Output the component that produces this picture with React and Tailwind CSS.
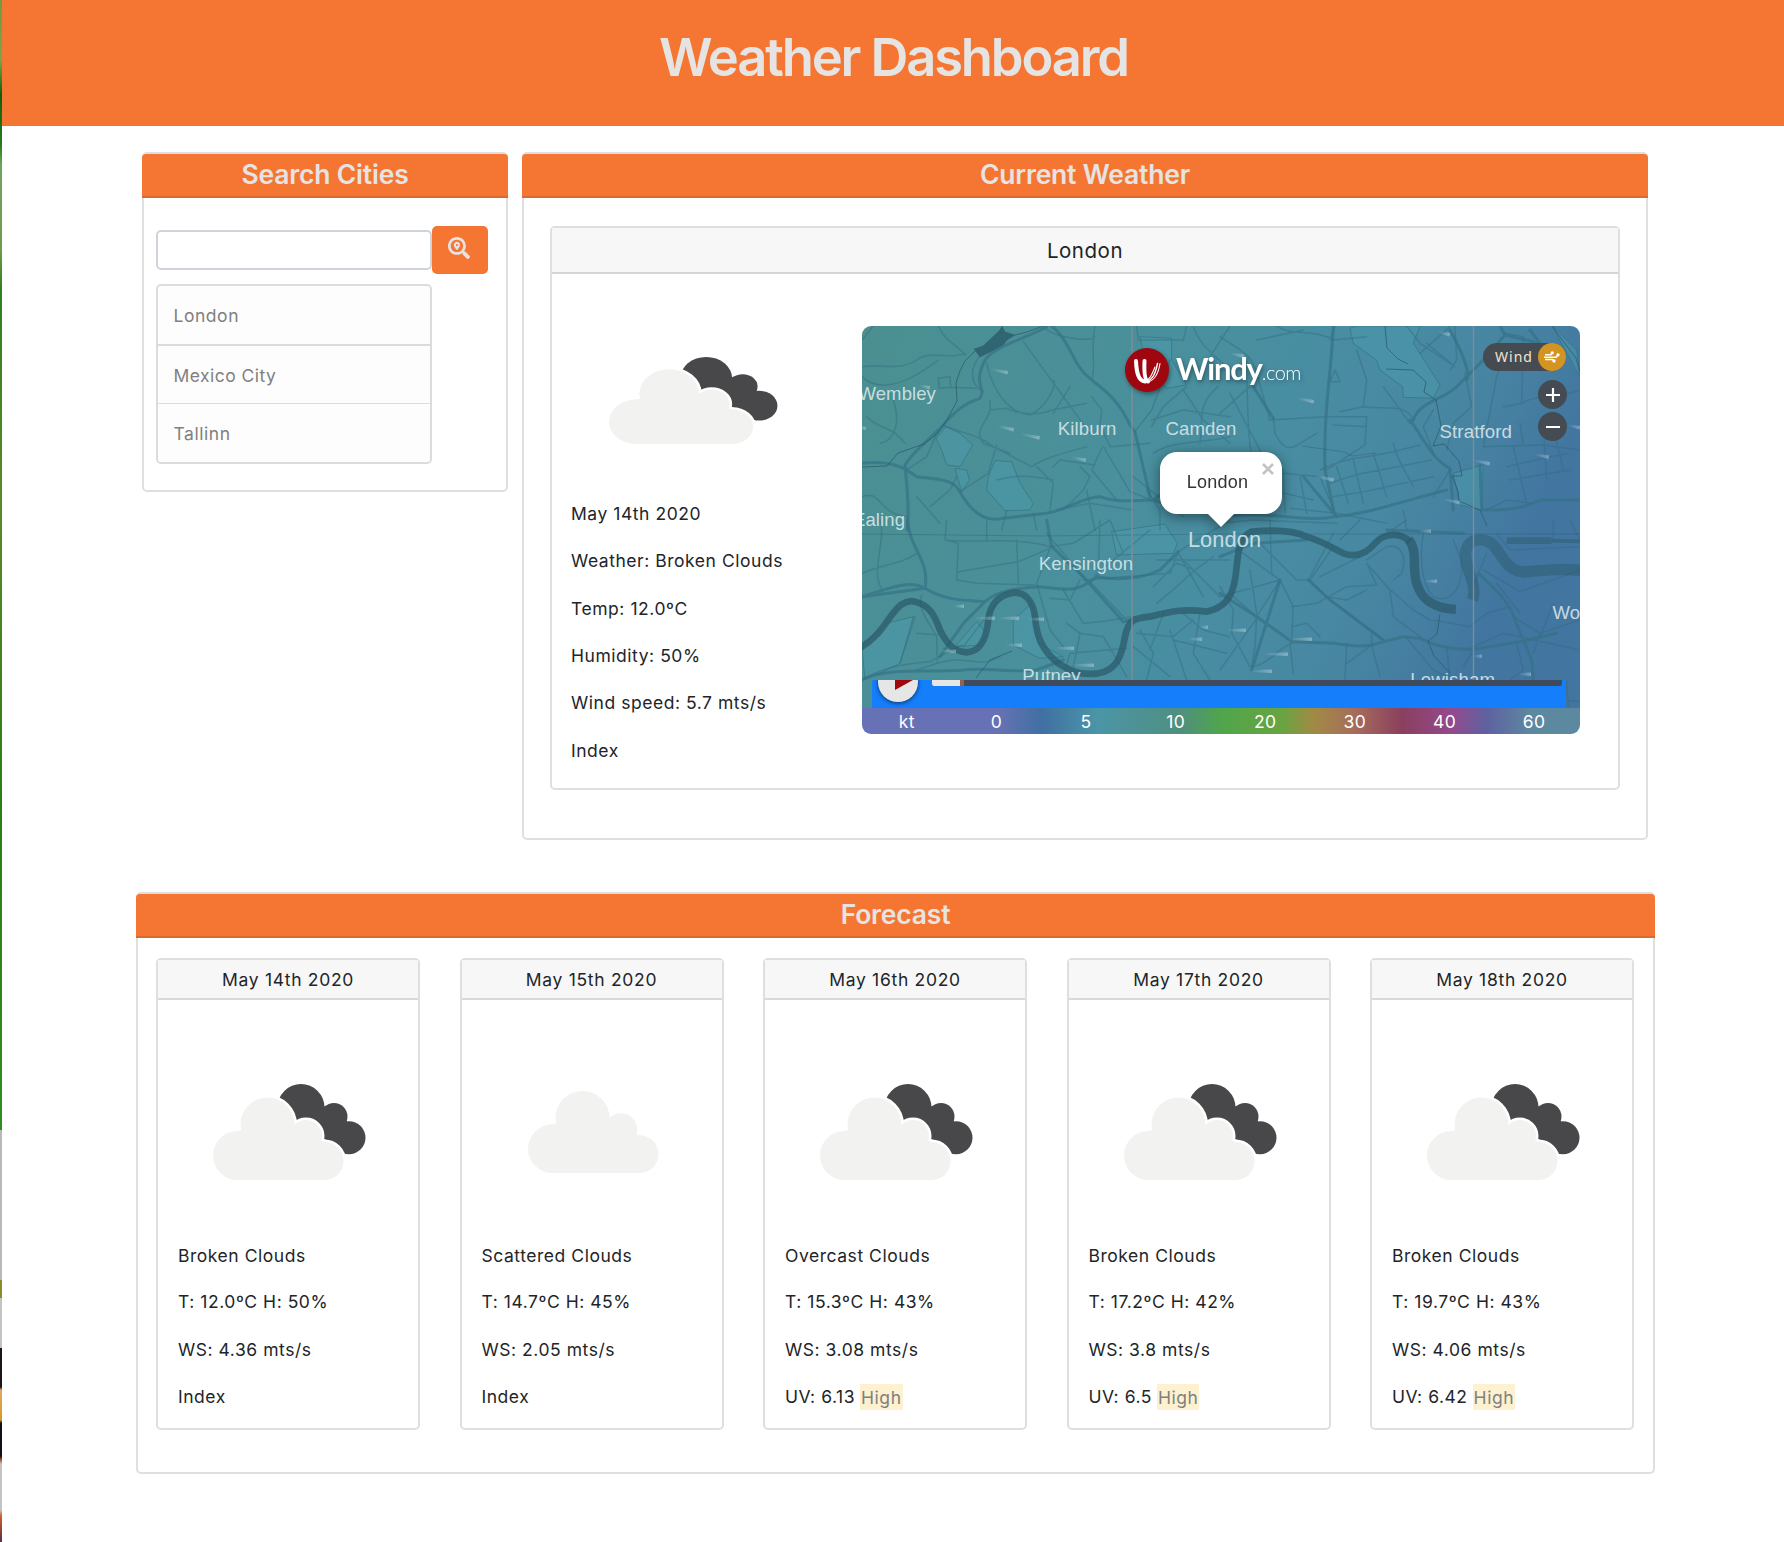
import React from "react";
import { FaSearchLocation } from "react-icons/fa";

function CloudShape() {
  return (
    <>
      <circle cx="24.500" cy="71.500" r="24.500" />
      <circle cx="54.500" cy="40.500" r="27" />
      <circle cx="93" cy="52" r="16" />
      <circle cx="111.500" cy="77" r="19" />
      <path d="M24.500 47 L54 40 L93 50 L111.500 58 V96 H24.500Z" />
    </>
  );
}

function BrokenClouds({ className }) {
  return (
    <svg className={className} viewBox="0 0 153 96" preserveAspectRatio="none">
      <g fill="#48484a">
        <circle cx="88" cy="23.500" r="23.500" />
        <circle cx="121" cy="32.500" r="13.500" />
        <circle cx="136" cy="53.700" r="16.500" />
        <path d="M88 23 L121 22 L136 40 L134 70 L100 60Z" />
      </g>
      <g fill="#ffffff" stroke="#ffffff" strokeWidth="5">
        <CloudShape />
      </g>
      <g fill="#f2f2f0">
        <CloudShape />
      </g>
    </svg>
  );
}

function ScatteredClouds({ className }) {
  return (
    <svg className={className} viewBox="0 13.500 131 82.500" preserveAspectRatio="none" fill="#f2f2f0">
      <CloudShape />
    </svg>
  );
}

const places = [
  ["Wembley", -3.5, 74.2, 18.5],
  ["Kilburn", 195.8, 109.2, 18.6],
  ["Camden", 303.5, 109.2, 18.6],
  ["Stratford", 577.5, 111.5, 18.7],
  ["Ealing", -9, 199.5, 18.5],
  ["Kensington", 176.8, 243.7, 18.7],
  ["London", 325.9, 220.7, 21.8],
  ["Wo", 690.5, 292.7, 18.5],
  ["Putney", 160.2, 356, 18.6],
  ["Lewisham", 548.2, 360, 18.7],
];

const streaks = [
  [134, 44, 12], [60, 60, 8], [140, 101, 12], [164, 109, 14], [214, 132, 10], [-2, 101, 6],
  [372, 28, 10], [440, 73, 12], [458, 151, 14], [580, 7, 8], [616, 135, 12], [677, 129, 10],
  [586, 174, 12], [710, 100, 8], [95, 280, 7], [118, 292, 15], [142, 292, 15], [170, 293, 12],
  [82, 325, 12], [148, 319, 12], [198, 322, 14], [216, 339, 16], [330, 313, 10], [340, 301, 6],
  [370, 304, 14], [434, 313, 16], [408, 328, 18], [394, 345, 16], [560, 205, 9], [566, 255, 9],
  [614, 330, 6], [660, 348, 9],
];

function CityMap() {
  return (
    <svg className="block h-full w-full tracking-[0.100px]" viewBox="0 0 718 382" fill="none">
      <defs>
        <linearGradient id="base" x1="0" y1="0" x2="1" y2="0.25">
          <stop offset="0" stopColor="#4b8f90" />
          <stop offset="0.35" stopColor="#4a909a" />
          <stop offset="0.6" stopColor="#488ea2" />
          <stop offset="0.8" stopColor="#4888a2" />
          <stop offset="0.92" stopColor="#457ea1" />
          <stop offset="1" stopColor="#4276a0" />
        </linearGradient>
        <linearGradient id="streak" x1="0" x2="1">
          <stop offset="0" stopColor="#ffffff" stopOpacity="0" />
          <stop offset="1" stopColor="#ffffff" stopOpacity="0.32" />
        </linearGradient>
        <clipPath id="labels">
          <rect width="718" height="354" />
        </clipPath>
      </defs>
      <rect width="718" height="382" fill="url(#base)" />

      {/* parks */}
      <g fill="#4c99ac" fillOpacity="0.5" stroke="#2f6f80" strokeOpacity="0.7" strokeWidth="2.500">
        <g transform="translate(-12 -16) scale(0.3333)">
          <path d="M258 385 L288 350 L330 370 L368 405 L330 470 L290 465 L275 420Z M315 475 L350 480 L358 510 L335 545Z M435 452 L485 455 L510 520 L550 580 L540 600 L465 602 L410 540 L415 500Z M870 80 L965 85 L965 150 L1010 225 L950 235 L890 170Z" />
        </g>
        <g transform="translate(358 -16) scale(0.3333)">
          <path d="M390 55 L410 48 L600 48 L580 100 L660 225 L640 265 L550 262 L548 230 L480 180 L470 150 L400 100Z M700 490 L790 465 L785 600 L720 585Z M1000 50 L1070 120 L1080 200 L1030 110Z" />
        </g>
        <g transform="translate(-12 194) scale(0.3333)">
          <path d="M785 35 L945 12 L982 70 L970 100 L800 105Z M36 380 L110 310 L190 290 L150 430 L45 480Z M380 305 L410 340 L390 375 L315 380Z M490 300 L545 250 L565 370 L640 410 L570 415 L490 375Z" />
        </g>
      </g>

      {/* minor streets */}
      <g stroke="#31697e" strokeOpacity="0.42" strokeWidth="4.500" strokeLinejoin="round" strokeLinecap="round">
        <g transform="translate(-12 -16) scale(0.3333)">
          <path d="M36 170 C90 160 150 185 200 150 C240 120 300 150 345 130 M265 48 C280 90 330 110 345 135 M36 90 L70 48 M36 200 C100 260 200 200 265 150 M265 205 L300 200 L302 232 L268 235Z M302 232 L380 235 M130 270 C150 330 140 390 90 400 M50 320 C90 360 130 350 165 400 M395 130 C360 170 355 220 400 245 M420 270 L420 300 L470 295 C500 310 560 320 605 300 M605 300 L710 280 M410 160 C430 250 480 310 540 315 C590 290 620 230 610 210 M520 95 L720 370 M580 48 C600 80 720 100 735 80 M660 230 L610 310 M420 300 C410 340 370 360 400 400 L480 430 M280 345 C330 370 380 370 430 410 L545 470 M330 545 L415 490 L440 405 M545 470 C590 440 640 430 710 410 M610 470 L630 450 L735 465 M560 470 L610 520 L600 600 M440 510 C520 490 550 500 610 510 M755 415 L725 480 L800 570 M640 600 L700 540 L720 500 L690 470 M36 560 C100 540 80 610 170 620 M200 560 L270 640 M170 480 L230 440 L265 360 M320 500 L300 540 L240 590 M470 603 L455 660 M550 610 L560 660 M620 600 L720 580 L850 600 M710 540 L735 660 M760 410 L840 545 L905 570 M735 48 C720 120 740 180 725 210 M725 260 L755 300 L750 345 L780 410 L900 400 M860 48 L865 90 L1000 90 L1010 48 M960 150 L905 300 L855 365 M1010 230 L940 290 L905 350 M1050 400 C1060 330 1040 280 1105 230 M1000 240 L1060 330 L1140 400 M905 330 L1000 300 L1140 320 M910 430 C970 390 1060 400 1140 380 M890 540 L930 600 L930 660 M850 500 L1000 620 M1140 48 L1080 140 M1030 48 C1050 110 1090 130 1140 180" />
        </g>
        <g transform="translate(358 -16) scale(0.3333)">
          <path d="M0 80 C40 110 100 130 110 190 L150 330 M110 90 L250 60 M170 48 C220 80 270 55 345 90 M345 50 L330 90 M340 90 L440 80 M410 120 L440 210 L430 290 L360 305 M345 180 L360 215 L330 215Z M430 290 C500 300 560 280 580 330 M80 215 C85 280 80 350 95 440 M145 330 L315 320 M0 310 L100 220 M30 250 L130 440 L190 480 M160 325 L165 370 C180 400 200 430 240 400 L290 370 M315 320 L440 320 L435 405 L320 480 M340 345 L440 350 M300 480 C340 460 380 445 440 440 L520 425 L600 405 M330 520 C380 500 430 488 480 480 L635 450 M340 560 C400 550 450 545 500 530 L640 500 M350 470 L385 580 M400 450 L430 580 M460 430 L500 560 M520 400 C530 450 555 480 580 530 M0 590 L100 520 L190 490 L300 500 M190 480 L195 610 M240 500 L260 610 M150 540 L280 570 M300 500 L350 620 M210 595 L350 610 L500 640 M550 600 L560 660 M640 560 L690 480 M490 230 L570 340 M560 48 L600 100 L705 170 L620 100 M705 48 L710 150 L690 180 M600 130 L690 50 M735 190 L755 290 L700 340 L680 420 M790 410 L830 200 L870 100 M855 70 L910 80 L905 280 L850 290 M905 280 C960 250 1000 270 1080 240 M790 410 L970 405 L1080 420 M880 410 L920 580 M900 340 L910 405 M970 350 L980 510 M990 310 L1030 480 M860 470 L1040 430 M870 510 L1050 480 M800 600 L860 570 L940 580 M640 300 L610 350 L640 430 M0 640 L100 630 L350 640" />
        </g>
        <g transform="translate(-12 194) scale(0.3333)">
          <path d="M90 0 C110 60 60 160 95 205 M36 160 C110 130 160 130 200 100 M290 0 L285 60 L325 70 L320 180 L380 190 M285 60 C380 70 500 50 600 80 M600 80 L670 70 L780 0 M410 0 L410 60 M500 60 L505 190 M325 155 L505 125 L600 85 M600 85 L560 190 M560 190 L600 330 L640 380 M380 190 L555 195 M215 225 C200 270 240 310 260 350 L262 430 L200 450 M36 480 C100 440 170 430 240 425 L335 375 M262 430 C350 400 380 450 450 410 M340 380 L440 250 M150 430 L195 290 M200 340 L265 345 M690 180 L660 240 L600 235 M720 185 L830 300 M735 165 L900 30 M640 210 L700 310 L750 305 L850 290 M650 310 L690 340 L760 350 L830 470 M690 340 L670 440 M700 180 L960 160 L985 95 M985 95 L1140 0 M985 100 L1060 230 M990 110 L1110 230 M910 200 L980 130 L1035 150 L1090 110 M1035 150 L980 200 L920 250 M1000 280 L1060 330 L1140 350 M860 340 L970 350 L1030 300 M850 380 L960 470 M870 330 L910 400 L890 480 M940 280 L900 390 M960 330 L1010 480 M1050 280 L1030 400 L1080 480 M970 360 L1130 400 M640 470 L660 400 L830 385 M745 170 L750 0 M780 0 L820 100 M920 120 L1140 120 M590 40 L700 170" />
        </g>
        <g transform="translate(358 194) scale(0.3333)">
          <path d="M0 50 L180 180 L110 290 M150 0 L155 160 M110 60 L230 180 L265 180 L340 40 M270 180 L320 230 L450 330 L490 360 M340 80 L270 180 M420 110 L300 170 M90 150 L110 280 M0 230 L180 180 L220 260 L215 360 M215 260 L290 250 L380 200 L470 195 L440 130 M320 230 L380 240 L440 210 M110 290 L40 230 M0 200 L40 270 L35 340 L90 440 M110 290 L105 380 L95 440 M110 295 L50 380 L0 450 M90 440 C140 440 180 380 215 370 M210 370 L220 460 M215 320 L260 310 L300 350 M380 370 L375 480 M380 430 L455 375 L455 340 M455 375 L480 470 M440 130 L510 210 L520 290 L600 350 M500 200 L580 270 L630 300 M560 355 L640 450 L690 475 M680 380 L690 480 M640 300 L750 320 L800 280 L870 260 M730 440 L760 390 M880 290 L960 340 L940 400 M830 190 L900 280 M850 340 L1080 390 M850 340 L740 390 M890 370 L910 450 L870 480 M960 340 L1080 300 M1000 250 L960 350 M470 60 L560 0 M360 60 L420 0 M610 40 C600 100 600 190 640 230 C700 260 740 180 720 110 L700 60 M440 120 L500 80 C550 70 560 120 545 160 L520 180 M790 150 L900 215 L1080 150 M800 100 L760 200 M830 40 L870 90 L1080 80 M1000 0 L1000 60 M1050 0 L1080 60 M1040 480 L1045 560 M1040 540 L1080 545" />
        </g>
      </g>

      {/* main roads */}
      <g stroke="#347286" strokeOpacity="0.7" strokeWidth="9" strokeLinejoin="round" strokeLinecap="round">
        <g transform="translate(-12 -16) scale(0.3333)">
          <path d="M590 50 C520 90 420 110 400 160 C370 230 410 230 390 265 C340 280 310 310 280 345 C240 390 200 410 165 465 C170 530 180 590 172 660 M36 460 C120 450 160 470 200 500 C280 510 310 510 330 545 C360 600 400 640 460 625 L590 610 C650 600 700 560 750 560 C800 580 860 570 910 570 L1010 500 M605 48 C660 90 670 170 720 205 C760 240 800 260 840 345 L855 365 L900 560 M910 570 C1000 600 1070 610 1140 600" />
        </g>
        <g transform="translate(358 -16) scale(0.3333)">
          <path d="M340 48 C335 180 310 300 315 480 L345 620 M100 230 L160 325 M0 620 C150 600 250 640 345 620 C450 610 560 570 680 540 M580 330 C600 270 680 270 720 220 L790 150 L855 75 L960 100 L930 60 M855 75 L840 48 M570 330 C620 400 640 450 690 475 L700 600 M780 465 L785 600 C850 600 900 600 960 570 L1080 570 M250 500 L350 620 M690 60 C740 150 750 200 740 210" />
        </g>
        <g transform="translate(-12 194) scale(0.3333)">
          <path d="M172 0 C180 90 240 120 225 205 L36 230 M36 230 C130 200 180 180 225 205 C290 245 350 240 405 245 C450 205 520 205 570 200 C650 210 680 220 740 170 C790 180 870 180 930 150 L985 95 M590 0 L605 80 L700 170 L820 305 M405 245 L340 310 L270 410 M36 480 C100 440 250 460 340 450 C400 440 460 460 560 450 L640 420 M820 305 L845 300" />
        </g>
        <g transform="translate(358 194) scale(0.3333)">
          <path d="M0 220 L110 290 L215 365 L345 370 C400 380 430 380 455 375 L550 350 L600 355 C650 380 710 390 760 388 L900 365 L1010 340 M180 180 L95 450 M265 180 L330 240 L490 360 M775 160 C830 210 870 250 885 300 L935 420 L940 480 M0 110 L100 70 L260 60 M500 30 L730 40" />
        </g>
      </g>

      {/* water */}
      <g stroke="#2b5a6b" strokeOpacity="0.74" strokeLinecap="butt" strokeLinejoin="round">
        <g transform="translate(-12 194) scale(0.3333)">
          <path strokeWidth="20" d="M30 384 C80 355 100 320 125 285 C150 250 175 240 195 245 C240 255 255 290 270 330 C290 370 310 395 350 397 C395 395 410 350 415 300 C420 250 450 225 490 218 C530 215 550 250 555 290 C560 350 575 390 625 430 C670 460 700 465 745 460 C800 450 815 410 825 350 C835 300 850 295 900 290 C960 275 1000 265 1070 275 C1145 260 1155 200 1160 140 C1165 90 1170 50 1205 35 C1260 30 1330 30 1370 50 C1420 65 1450 85 1480 100 C1520 115 1550 100 1575 70 C1600 40 1650 35 1680 65" />
          <path strokeWidth="28" d="M1676 58 C1705 95 1685 140 1700 190 C1715 240 1750 265 1818 268" />
          <path strokeWidth="34" strokeOpacity="0.46" d="M1868 240 C1885 190 1838 140 1848 90 C1858 55 1900 50 1930 75 C1960 110 1970 150 2020 156 C2090 150 2140 145 2200 152" />
          <path strokeWidth="20" strokeOpacity="0.46" d="M1970 62 L2105 62" />
          <path strokeWidth="12" strokeOpacity="0.46" d="M2105 62 L2200 64" />
        </g>
        <path strokeWidth="0.500" fill="#2f6672" d="M112 23 L121 20 L138 4 L140 0 L143 6 L153 9 L145 14 L141 19 L128 26 L118 31Z" />
        <path strokeWidth="1" d="M153 9 L165 6 L181 0 M113 25 L103 35 L98 45 L94 57 L95 75 L86 92 L76 107 L62 118 L36 127 L25 140 L0 141 M523 0 L525 22 L536 33 L546 38 M524 43 L551 44 L564 56 L562 66 L574 74 L579 100 L571 120 L582 118 L597 135 L600 150 L590 150 L596 165 L597 175 L618 184 L625 200 M690 0 L701 15 L714 32 L718 46 M578 288 L575 308 L566 315 L572 330 L588 347 M114 352 L128 334 L150 325" />
        <path strokeWidth="1" strokeOpacity="0.350" d="M0 208 L180 210 L358 208 L718 208 M440 120 L482 126 L490 130 L514 127" />
      </g>

      {/* tile seams */}
      <path d="M270 0 V354 M611.500 0 V354" stroke="#808e94" strokeWidth="1.400" />

      {streaks.map(([x, y, w], i) => (
        <g key={i} transform={y < 200 ? `rotate(12 ${x} ${y})` : undefined}>
          <path d={`M${x - w * 0.4} ${y - 0.8} L${x + w} ${y - 1.6} V${y + 2} L${x - w * 0.4} ${y + 1}Z`} fill="url(#streak)" />
        </g>
      ))}

      <g
        clipPath="url(#labels)"
        fill="#e2eff2"
        fillOpacity="0.84"
        className="font-['Liberation_Sans',sans-serif]"
      >
        {places.map(([name, x, y, size]) => (
          <text key={name} x={x} y={y} fontSize={size}>
            {name}
          </text>
        ))}
      </g>
    </svg>
  );
}

function WindyLogo() {
  return (
    <div className="absolute left-[263px] top-[22px] flex items-center drop-shadow-[1px_2px_2px_rgba(0,0,0,0.4)]">
      <svg className="h-[44px] w-[44px]" viewBox="0 0 44 44" fill="none">
        <circle cx="22" cy="22" r="22" fill="#9e0610" />
        <g stroke="#ffffff" strokeLinecap="round">
          <path d="M11 13 C11.500 24 13 33 20 33.500" strokeWidth="4" />
          <path d="M19.500 13 C19 24 19.500 32 23 33.500" strokeWidth="4" />
          <path d="M21 33.500 C28 32 30.500 25 32.500 15.500" strokeWidth="1.400" />
          <path d="M23 34 C30 32 33.500 25 35 15.500" strokeWidth="1.100" />
          <path d="M19 34 C25 32 27 26 30 19" strokeWidth="1.100" />
        </g>
      </svg>
      <div className="ml-[7px] flex items-baseline whitespace-nowrap pb-[3px] font-['Lato',sans-serif] leading-none text-white">
        <span className="text-[31px] font-bold tracking-[-1.200px]">Windy</span>
        <span className="text-[20px] font-light tracking-[-0.500px]">.com</span>
      </div>
    </div>
  );
}

function WindToggle() {
  return (
    <div className="absolute left-[621px] top-[17px] flex h-[28px] w-[83px] items-center justify-between rounded-full bg-[#454b51] pl-[12px]">
      <span className="pb-[2px] font-['Noto_Sans',sans-serif] text-[14px] tracking-[1px] text-[#f2e6d2]">Wind</span>
      <span className="flex h-[28px] w-[28px] shrink-0 items-center justify-center rounded-full bg-[#d49422]">
        <svg className="h-[12px] w-[16px]" viewBox="0 0 16 12" fill="none" stroke="#fff" strokeWidth="1.500">
          <path d="M1 3.800 H7 L8 2.200 M0 6.200 H12 L14 4.200 M1 8.600 H8.500 L10 10" />
          <circle cx="8.200" cy="1.800" r="0.900" />
          <circle cx="14" cy="3.800" r="0.900" />
          <circle cx="10" cy="10" r="0.900" />
        </svg>
      </span>
    </div>
  );
}

function ZoomButton({ className, plus }) {
  return (
    <div className={className}>
      <svg className="h-[14px] w-[14px]" viewBox="0 0 14 14" stroke="#fff" strokeWidth="2.200">
        <path d={plus ? "M0 7 H14 M7 0 V14" : "M0 7 H14"} />
      </svg>
    </div>
  );
}

function WindyMap() {
  return (
    <div className="relative flex h-[408px] w-[718px] flex-col overflow-hidden rounded-[9px]">
      <div className="h-[382px]">
        <CityMap />
      </div>
      <div className="flex h-[26px] items-center bg-[linear-gradient(90deg,#6672b5_0px,#6672b5_136px,#4070a2_180px,#4b95a8_235px,#4f8f80_318px,#50a54b_360px,#69a441_420px,#a28945_453px,#a66d5b_492px,#8b3f5e_540px,#94498c_588px,#5f61a1_625px,#5c88a0_668px)] pr-[1px] pt-[2px] text-[17.500px] text-white">
        {["kt", "0", "5", "10", "20", "30", "40", "60"].map((v) => (
          <span key={v} className="flex-1 text-center tracking-[0.400px]">
            {v}
          </span>
        ))}
      </div>

      <div className="absolute left-[10px] top-[354px] h-[28px] w-[694px] overflow-hidden bg-[#157efb]">
        <div className="ml-[60px] flex h-[6px] w-[630px] overflow-hidden rounded-b-[2px] bg-[#3f4a5d]">
          <div className="h-full w-[28px] bg-[#e6e6e6]" />
          <div className="h-full w-[4px] bg-[#96604f]" />
        </div>
        <div className="absolute left-[6px] top-[-18px] h-[40px] w-[40px] rounded-full bg-[#e6e6e6] shadow-[0_1px_4px_rgba(0,0,0,0.6)]">
          <svg className="h-[40px] w-[40px]" viewBox="0 0 40 40">
            <path d="M17 8 L35 18 L17 28Z" fill="#a0060e" />
          </svg>
        </div>
      </div>

      <WindyLogo />
      <WindToggle />
      <ZoomButton plus className="absolute left-[676px] top-[54px] flex h-[29px] w-[29px] items-center justify-center rounded-full bg-[#444b52]" />
      <ZoomButton className="absolute left-[676px] top-[86px] flex h-[29px] w-[29px] items-center justify-center rounded-full bg-[#444b52]" />

      <div className="absolute left-[298px] top-[126px] h-[75px] w-[122px] drop-shadow-[0_3px_7px_rgba(0,0,0,0.45)]">
        <div className="flex h-[62px] items-center justify-center rounded-[17px] bg-white pb-[2px] pr-[7px] font-['Liberation_Sans',sans-serif] text-[18px] tracking-[0.200px] text-[#333]">
          London
        </div>
        <svg className="mx-auto h-[13px] w-[26px]" viewBox="0 0 26 13">
          <path d="M0 0 H26 L13 13Z" fill="#fff" />
        </svg>
        <svg className="absolute right-[8px] top-[11px] h-[12px] w-[12px]" viewBox="0 0 12 12" stroke="#c3c3c3" strokeWidth="2.600">
          <path d="M1 1 L11 11 M11 1 L1 11" />
        </svg>
      </div>
    </div>
  );
}

function SectionHeader({ children }) {
  return (
    <h2 className="-mx-[2px] flex h-[44px] shrink-0 items-center justify-center rounded-t-[4px] border-b-2 border-[#db6a2e] bg-[#f57633] text-[26.500px] font-semibold tracking-[-0.200px] text-[#e6e4e3]">
      {children}
    </h2>
  );
}

const rowClass = "flex h-[47.300px] items-center whitespace-nowrap";

function ForecastCard({ date, sky, temp, wind, uv, scattered }) {
  return (
    <article className="flex h-[472px] w-[264px] shrink-0 flex-col rounded-[5px] border-2 border-[#dfdfdf] bg-white">
      <h3 className="flex h-[40px] shrink-0 items-center justify-center border-b-2 border-[#d9d9d9] bg-[#f7f7f7] pt-[2px] tracking-[0.700px]">
        {date}
      </h3>
      <div className="h-[232px] shrink-0">
        {scattered ? (
          <ScatteredClouds className="ml-[66px] mt-[91px] h-[82px] w-[131px]" />
        ) : (
          <BrokenClouds className="ml-[55px] mt-[84px] h-[96px] w-[153px]" />
        )}
      </div>
      <div className="pl-[20px]">
        <p className={rowClass}>{sky}</p>
        <p className="flex h-[47.300px] items-center whitespace-nowrap pb-[2px]">{temp}</p>
        <p className={rowClass}>{wind}</p>
        <p className={rowClass}>
          {uv ? (
            <>
              UV: {uv}
              <mark className="mb-[1px] ml-[5px] h-[26px] bg-[#fdf1cf] px-[1px] leading-[27px] text-[#808080]">High</mark>
            </>
          ) : (
            "Index"
          )}
        </p>
      </div>
    </article>
  );
}

const forecast = [
  { date: "May 14th 2020", sky: "Broken Clouds", temp: "T: 12.0ºC H: 50%", wind: "WS: 4.36 mts/s" },
  { date: "May 15th 2020", sky: "Scattered Clouds", temp: "T: 14.7ºC H: 45%", wind: "WS: 2.05 mts/s", scattered: true },
  { date: "May 16th 2020", sky: "Overcast Clouds", temp: "T: 15.3ºC H: 43%", wind: "WS: 3.08 mts/s", uv: "6.13" },
  { date: "May 17th 2020", sky: "Broken Clouds", temp: "T: 17.2ºC H: 42%", wind: "WS: 3.8 mts/s", uv: "6.5" },
  { date: "May 18th 2020", sky: "Broken Clouds", temp: "T: 19.7ºC H: 43%", wind: "WS: 4.06 mts/s", uv: "6.42" },
];

const details = ["May 14th 2020", "Weather: Broken Clouds", "Temp: 12.0ºC", "Humidity: 50%", "Wind speed: 5.7 mts/s", "Index"];

export default function App() {
  return (
    <div className="flex h-[1542px] w-[1784px] overflow-hidden bg-white font-['Inter',sans-serif] text-[17.500px] tracking-[0.540px] text-[#212529]">
      <div className="h-full w-[2px] shrink-0 bg-[linear-gradient(180deg,#6f9a45_0px,#7ba545_60px,#0f5f10_95px,#2a7a20_145px,#6fa55f_165px,#6f9a4f_250px,#2f7f1f_290px,#5a8a28_500px,#2c7d14_800px,#2f8f1c_1130px,#b9b9b9_1130px,#b9b9b9_1280px,#8b8a2c_1280px,#8b8a2c_1298px,#c4c4c4_1298px,#c4c4c4_1348px,#1c1418_1348px,#1c1418_1387px,#e0a860_1390px,#d89a20_1420px,#101018_1423px,#101018_1456px,#b85a20_1460px,#c4c4c4_1464px,#c4c4c4_1510px,#d0602a_1516px,#5a3040_1542px)]" />
      <div className="flex flex-1 flex-col">
        <header className="flex h-[126px] items-center justify-center bg-[#f57633] pb-[11px] pl-[1px]">
          <h1 className="text-[52.500px] font-semibold tracking-[-2.150px] text-[#e6e4e3]">Weather Dashboard</h1>
        </header>

        <div className="ml-[140px] mt-[26px] flex items-start gap-[14px]">
          <section className="flex h-[340px] w-[366px] flex-col rounded-[5px] border-2 border-[#dfdfdf]">
            <SectionHeader>Search Cities</SectionHeader>
            <div className="ml-[12px] mt-[28px] flex items-center">
              <input className="h-[40px] w-[276px] rounded-[5px] border-2 border-[#ced4da] bg-white" />
              <button className="flex h-[48px] w-[56px] items-center justify-center rounded-[5px] bg-[#f57633] pb-[4px] pr-[2px] text-[#e6e4e3]">
                <FaSearchLocation className="h-[22px] w-[22px]" />
              </button>
            </div>
            <ul className="ml-[12px] mt-[10px] w-[276px] rounded-[5px] border-2 border-[#dcdcdc] bg-[#fdfdfd] text-[#808080]">
              <li className="flex h-[60px] items-center border-b-2 border-[#dcdcdc] pl-[15.500px] pt-[2px]">London</li>
              <li className="flex h-[58px] items-center border-b border-[#dcdcdc] pl-[15.500px] pt-[3px] tracking-[0.450px]">Mexico City</li>
              <li className="flex h-[58px] items-center pl-[15.500px] pt-[2px]">Tallinn</li>
            </ul>
          </section>

          <section className="flex h-[688px] w-[1126px] flex-col rounded-[5px] border-2 border-[#dfdfdf]">
            <SectionHeader>Current Weather</SectionHeader>
            <article className="ml-[26px] mt-[28px] flex h-[564px] w-[1070px] flex-col rounded-[5px] border-2 border-[#dfdfdf]">
              <h3 className="flex h-[46px] shrink-0 items-center justify-center border-b-2 border-[#d4d4d4] bg-[#f7f7f7] pt-[3px] text-[20.500px]">
                London
              </h3>
              <div className="flex">
                <div className="w-[310px] pl-[19px]">
                  <BrokenClouds className="mb-[46.500px] ml-[38px] mt-[83px] h-[87px] w-[169px]" />
                  {details.map((d) => (
                    <p key={d} className={rowClass}>
                      {d}
                    </p>
                  ))}
                </div>
                <div className="mt-[52px]">
                  <WindyMap />
                </div>
              </div>
            </article>
          </section>
        </div>

        <section className="ml-[134px] mt-[52px] flex h-[582px] w-[1519px] flex-col rounded-[5px] border-2 border-[#dfdfdf]">
          <SectionHeader>Forecast</SectionHeader>
          <div className="flex justify-between pl-[18px] pr-[19px] pt-[20px]">
            {forecast.map((f) => (
              <ForecastCard key={f.date} {...f} />
            ))}
          </div>
        </section>
      </div>
    </div>
  );
}
